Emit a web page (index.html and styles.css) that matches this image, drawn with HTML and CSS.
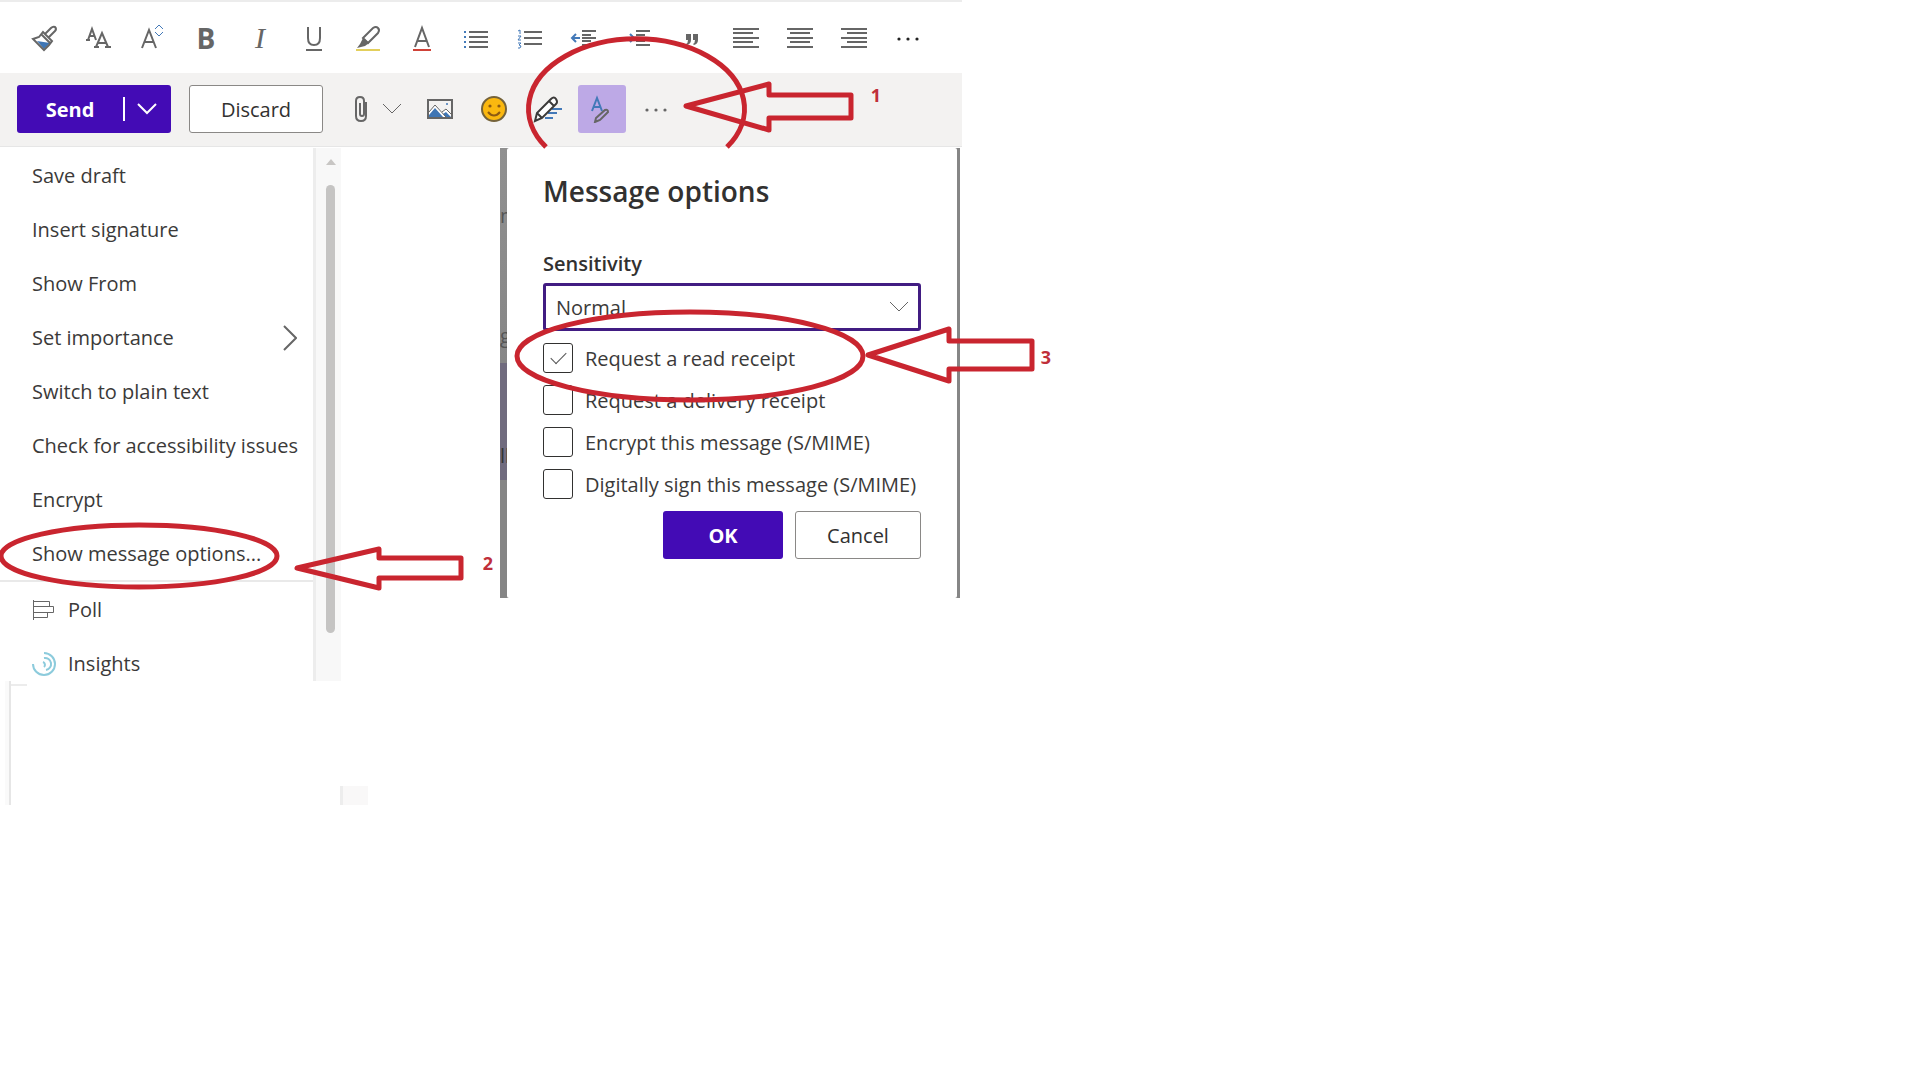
FILE: index.html
```html
<!DOCTYPE html>
<html lang="en">
<head>
<meta charset="utf-8">
<title>Message options</title>
<link rel="stylesheet" href="styles.css">
</head>
<body>
<main class="compose">
  <div class="toolbar" role="toolbar" aria-label="Formatting">
    <button class="tool" aria-label="Format painter"><svg width="28" height="28" viewBox="0 0 28 28"><path class="fill-blue" d="M7 17l13 2-6 6z"/><path class="line" d="M3 15l6-2 4-5 9 9-3 4-5 5zM15 10l6-6q2-2 4-1 2 2 0 4l-6 6M11 10l9 9"/></svg></button>
    <button class="tool" aria-label="Font"><svg width="28" height="28" viewBox="0 0 28 28"><path class="line" d="M4 16l4-11 4 11M5 12h6M2 16h4M12 23l6-14 6 14M14 19h8M10 23h5M21 23h6"/></svg></button>
    <button class="tool" aria-label="Font size"><svg width="28" height="28" viewBox="0 0 28 28"><path class="line" d="M4 24L11 6l7 18M6 18h10"/><path class="blue thin" d="M17 5l4-4 4 4M17 8l4 4 4-4"/></svg></button>
    <button class="tool bold" aria-label="Bold">B</button>
    <button class="tool italic" aria-label="Italic">I</button>
    <button class="tool" aria-label="Underline"><svg width="28" height="28" viewBox="0 0 28 28"><path class="line" d="M8 3v11q0 7 6 7t6-7V3M6 26h16"/></svg></button>
    <button class="tool" aria-label="Highlight"><svg width="28" height="28" viewBox="0 0 28 28"><path class="line" d="M9 14L19 4q3-2 5 0t0 5L14 19z"/><path class="fill-grey" d="M9 14l6 5-4 3-8 2 3-4z"/><path class="yellow" d="M2 26h24"/></svg></button>
    <button class="tool" aria-label="Font colour"><svg width="28" height="28" viewBox="0 0 28 28"><path class="line" d="M7 23L14 4l7 19M9 17h10"/><path class="red" d="M5 26h18"/></svg></button>
    <button class="tool" aria-label="Bullets"><svg width="28" height="28" viewBox="0 0 28 28"><path class="line" d="M7 8h19M7 13h19M7 18h19M7 23h19"/><path class="blue" d="M2 8h2M2 13h2M2 18h2M2 23h2"/></svg></button>
    <button class="tool" aria-label="Numbering"><svg width="28" height="28" viewBox="0 0 28 28"><path class="line" d="M8 8h18M8 14h18M8 20h18"/><path class="blue thin" d="M2 7l2-1v4M2 12h3l-3 4h3M2 19h3l-2 2 2 1-1 2H2"/></svg></button>
    <button class="tool" aria-label="Decrease indent"><svg width="28" height="28" viewBox="0 0 28 28"><path class="line" d="M12 7h14M12 11h9M12 14h14M12 17h9M12 21h14"/><path class="blue" d="M10 14H2M6 10l-4 4 4 4"/></svg></button>
    <button class="tool" aria-label="Increase indent"><svg width="28" height="28" viewBox="0 0 28 28"><path class="line" d="M12 7h14M12 11h9M12 14h14M12 17h9M12 21h14"/><path class="blue" d="M1 14h8M6 10l4 4-4 4"/></svg></button>
    <button class="tool" aria-label="Quote"><svg width="28" height="28" viewBox="0 0 28 28"><path class="fill-grey" d="M8 10h5v6q0 4-4 5l-1-1q2-1 2-4H8zM15 10h5v6q0 4-4 5l-1-1q2-1 2-4h-2z"/></svg></button>
    <button class="tool" aria-label="Align left"><svg width="28" height="28" viewBox="0 0 28 28"><path class="line" d="M1 5h26M1 9h20M1 14h26M1 18h20M1 23h26"/></svg></button>
    <button class="tool" aria-label="Centre"><svg width="28" height="28" viewBox="0 0 28 28"><path class="line" d="M1 5h26M4 9h20M1 14h26M4 18h20M1 23h26"/></svg></button>
    <button class="tool" aria-label="Align right"><svg width="28" height="28" viewBox="0 0 28 28"><path class="line" d="M1 5h26M7 9h20M1 14h26M7 18h20M1 23h26"/></svg></button>
    <button class="tool" aria-label="More formatting"><svg width="28" height="28" viewBox="0 0 28 28"><g class="fill-black"><circle cx="5" cy="15" r="1.600"/><circle cx="14" cy="15" r="1.600"/><circle cx="23" cy="15" r="1.600"/></g></svg></button>
  </div>

  <div class="commands">
    <div class="split">
      <button class="send">Send</button>
      <button class="send-more" aria-label="More send options"><svg width="20" height="12" viewBox="0 0 20 12"><path class="white" d="M1 1l9 9 9-9"/></svg></button>
    </div>
    <button class="plain discard">Discard</button>
    <div class="inserts">
      <button class="clip" aria-label="Attach"><svg width="14" height="28" viewBox="0 0 14 28"><path class="line" d="M12 7v14q0 5-5 5t-5-5V6q0-4 4-4t4 4v13q0 2-2 2t-2-2V8"/></svg></button>
      <button class="clip-more" aria-label="Attach options"><svg width="20" height="12" viewBox="0 0 20 12"><path class="line thin" d="M1 1l9 9 9-9"/></svg></button>
      <button class="tool" aria-label="Insert picture"><svg width="28" height="28" viewBox="0 0 28 28"><path class="line" d="M2 5h24v18H2z"/><path class="fill-white" d="M3 17l6-7 7 7 4-3 5 5v3H3z"/><path class="fill-blue" d="M3 20l6-7 8 9H3zM17 19l3-2 5 5h-5z"/><path class="line thin" d="M3 17l6-7 11 12M16 17l4-3 6 6"/><circle class="fill-blue" cx="21" cy="9" r="1"/></svg></button>
      <button class="tool" aria-label="Insert emoji"><svg width="28" height="28" viewBox="0 0 28 28"><circle class="face" cx="14" cy="14" r="12"/><circle class="fill-brown" cx="10" cy="11" r="1.600"/><circle class="fill-brown" cx="19" cy="11" r="1.600"/><path class="brown" d="M8 17q6 7 12 0"/></svg></button>
      <button class="tool" aria-label="Signature"><svg width="30" height="28" viewBox="0 0 30 28"><path class="blue" d="M19 14h10M15 18h9M12 23h8"/><path class="pencil" d="M2 26l2-8L18 4q3-3 5 0t0 5L9 23zM4 18l5 5M16 6l5 5"/></svg></button>
      <button class="tool active" aria-label="Formatting options" aria-pressed="true"><svg width="28" height="28" viewBox="0 0 28 28"><path class="blue" d="M4 16L9 3l5 13M6 12h6"/><path class="line" d="M7 27l1-4 9-8q3-1 3 2l-8 8z"/></svg></button>
      <button class="tool" aria-label="More options"><svg width="28" height="28" viewBox="0 0 28 28"><g class="fill-grey"><circle cx="5" cy="15" r="1.600"/><circle cx="14" cy="15" r="1.600"/><circle cx="23" cy="15" r="1.600"/></g></svg></button>
    </div>
  </div>

  <div class="panels">
    <section class="menu-panel">
      <div class="menu" role="menu">
        <button role="menuitem">Save draft</button>
        <button role="menuitem">Insert signature</button>
        <button role="menuitem">Show From</button>
        <button role="menuitem">Set importance<svg class="next" width="14" height="26" viewBox="0 0 14 26"><path class="line" d="M1 1l12 12L1 25"/></svg></button>
        <button role="menuitem">Switch to plain text</button>
        <button role="menuitem">Check for accessibility issues</button>
        <button role="menuitem">Encrypt</button>
        <button role="menuitem">Show message options...</button>
        <hr>
        <button role="menuitem"><svg width="24" height="24" viewBox="0 0 24 24"><path class="line thin" d="M1.500 2v20M1.500 3.500h16v5h-16M1.500 8.500h20v6h-20M1.500 14.500h14v5h-14"/></svg>Poll</button>
        <button role="menuitem"><svg width="24" height="24" viewBox="0 0 24 24"><path class="teal" d="M12 1a11 11 0 1 1-11 11M12 6a6 6 0 0 1 2 12M11 10a3 3 0 0 1 1 5"/></svg>Insights</button>
      </div>
      <div class="scroll"><span class="scroll-up"></span><span class="thumb"></span></div>
    </section>

    <section class="backdrop">
      <div class="behind" aria-hidden="true"><span class="peek">m</span><span class="peek">g</span><span class="peek dark">ll</span></div>
      <form class="dialog">
        <h1>Message options</h1>
        <label class="field-label" for="sensitivity">Sensitivity</label>
        <div class="select-wrap">
          <select id="sensitivity"><option>Normal</option></select>
          <svg class="caret" width="20" height="12" viewBox="0 0 20 12"><path class="line thin" d="M1 1l9 9 9-9"/></svg>
        </div>
        <label class="check"><input type="checkbox" checked><span>Request a read receipt</span></label>
        <label class="check"><input type="checkbox"><span>Request a delivery receipt</span></label>
        <label class="check"><input type="checkbox"><span>Encrypt this message (S/MIME)</span></label>
        <label class="check"><input type="checkbox"><span>Digitally sign this message (S/MIME)</span></label>
        <div class="actions"><button type="button" class="primary">OK</button><button type="button" class="plain">Cancel</button></div>
      </form>
    </section>
  </div>

  <div class="remnant"><div class="pane-edge"></div><div class="scroll-edge"></div></div>

  <svg class="marks" width="1080" height="620" viewBox="0 0 1080 620" aria-hidden="true">
    <path d="M546 147A108 70 0 1 1 727 147"/>
    <path d="M686 106L769 84V95H851V118H769V130Z"/>
    <ellipse cx="139" cy="556" rx="138" ry="31"/>
    <path d="M297 568L379 549V558H461V578H379V588Z"/>
    <ellipse cx="690" cy="356" rx="173" ry="44"/>
    <path d="M868 355L949 329V341H1032V369H949V381Z"/>
    <text x="876" y="102">1</text>
    <text x="488" y="570">2</text>
    <text x="1046" y="364">3</text>
  </svg>
</main>
</body>
</html>
```
FILE: styles.css
```css
* { box-sizing: border-box; }
body {
  margin: 0;
  background: #fff;
  color: #3b3a39;
  font: 20px/28px "Open Sans", "Noto Sans", sans-serif;
}
button {
  margin: 0;
  padding: 0;
  border: 0;
  background: none;
  color: inherit;
  font: inherit;
}
svg { display: block; flex: none; fill: none; }

.line { stroke: #666; stroke-width: 2; }
.blue { stroke: #4379b8; stroke-width: 2; }
.yellow { stroke: #e3cf5c; stroke-width: 2; }
.red { stroke: #cf4238; stroke-width: 2; }
.white { stroke: #fff; stroke-width: 2; }
.teal { stroke: #8ccbdc; stroke-width: 2; }
.pencil { fill: #fff; stroke: #3b3a39; stroke-width: 2; }
.face { fill: #fbb80f; stroke: #75633a; stroke-width: 2; }
.brown { stroke: #8d5a12; stroke-width: 2; }
.thin { stroke-width: 1; }
.fill-brown { fill: #8d5a12; }
.fill-blue { fill: #3f76b5; }
.fill-grey { fill: #666; }
.fill-black { fill: #222; }
.fill-white { fill: #fff; }

.compose { position: relative; width: 100%; max-width: 962px; }
.toolbar {
  display: flex;
  height: 73px;
  padding: 1px 17px 0;
  border-top: 2px solid #ececec;
}
.tool {
  display: flex;
  align-items: center;
  justify-content: center;
  width: 54px;
  color: #666;
}
.bold { font: 700 28px/28px "Open Sans", sans-serif; }
.italic { font: italic 30px/30px "Liberation Serif", serif; }

.commands {
  display: flex;
  align-items: center;
  height: 74px;
  padding: 0 17px 2px;
  background: #f3f2f1;
  border-bottom: 1px solid #e6e6e6;
}
.split {
  display: flex;
  align-items: center;
  width: 154px;
  height: 48px;
  border-radius: 3px;
  background: #430bb5;
  color: #fff;
}
.send { flex: 1; padding-top: 2px; font-weight: 700; }
.send-more {
  display: flex;
  align-items: center;
  justify-content: center;
  width: 48px;
  height: 24px;
  padding-right: 2px;
  border-left: 2px solid #fff;
}
.plain {
  height: 48px;
  padding-top: 2px;
  border: 1px solid #8a8886;
  border-radius: 3px;
  background: #fff;
  color: #323130;
  font-weight: 500;
}
.discard { width: 134px; margin-left: 18px; }
.inserts { display: flex; align-items: center; margin-left: 22px; }
.inserts .tool { height: 48px; }
.clip, .clip-more { display: flex; align-items: center; justify-content: center; height: 48px; }
.clip { width: 32px; }
.clip-more { width: 36px; padding-right: 6px; }
.inserts .active { width: 48px; margin: 0 3px; border-radius: 3px; background: #bda9e6; }

.panels { display: flex; align-items: flex-start; gap: 159px; padding: 1px 2px 0 0; }
.menu-panel { display: flex; width: 341px; height: 533px; overflow: hidden; }
.menu { flex: 1; min-width: 0; }
.menu button {
  display: flex;
  align-items: center;
  gap: 12px;
  width: 100%;
  height: 54px;
  padding: 2px 16px 0 32px;
  text-align: left;
  white-space: nowrap;
}
.menu hr { height: 2px; margin: 0; border: 0; background: #e9e9e9; }
.next { margin-left: auto; }
.scroll {
  width: 28px;
  padding: 11px 6px 0 10px;
  border-left: 3px solid #ededed;
  background: #f8f8f8;
}
.scroll-up {
  display: block;
  height: 6px;
  border: 5px solid transparent;
  border-top: 0;
  border-bottom: 6px solid #c8c6c4;
}
.thumb { display: block; height: 448px; margin-top: 20px; border-radius: 5px; background: #c5c4c3; }

.backdrop { display: flex; flex: 1; height: 450px; padding-right: 3px; background: #868686; }
.behind {
  display: flex;
  flex-direction: column;
  width: 7px;
  padding-top: 54px;
  gap: 92px;
  overflow: hidden;
  background: linear-gradient(#909090 0, #868686 215px, #706b7e 215px, #706b7e 332px, #858585 332px);
}
.peek { display: flex; height: 28px; color: #555; }
.dark { color: #333; }
.dialog { flex: 1; padding: 23px 36px 0; border-radius: 2px; background: #fff; }
.dialog h1 { margin: 0 0 39px; color: #323130; font-size: 28px; line-height: 40px; font-weight: 600; }
.field-label { display: block; height: 33px; color: #323130; font-weight: 600; }
.select-wrap { display: flex; align-items: center; margin-bottom: 12px; }
select {
  appearance: none;
  flex: 1;
  height: 48px;
  padding: 2px 10px 0;
  border: 3px solid #411c82;
  border-radius: 3px;
  background: #fff;
  color: #3b3a39;
  font: inherit;
}
.caret { margin-left: -32px; margin-right: 12px; pointer-events: none; }
.check { display: flex; align-items: center; gap: 12px; height: 30px; margin-bottom: 12px; white-space: nowrap; }
.check span { padding-top: 2px; }
.check input {
  appearance: none;
  flex: none;
  width: 30px;
  height: 30px;
  margin: 0;
  border: 1px solid #323130;
  border-radius: 3px;
}
.check input:checked::before {
  content: "";
  display: block;
  width: 14px;
  height: 7px;
  margin: 8px auto 0;
  border: solid #555;
  border-width: 0 0 1px 1px;
  transform: rotate(-45deg);
}
.actions { display: flex; justify-content: flex-end; gap: 12px; }
.primary { width: 120px; height: 48px; padding-top: 2px; border-radius: 3px; background: #430bb5; color: #fff; font-weight: 700; }
.actions .plain { width: 126px; }

.remnant { display: flex; align-items: flex-end; justify-content: space-between; width: 368px; height: 124px; padding-left: 5px; }
.pane-edge { width: 6px; height: 124px; border-right: 2px solid #e6e6e6; background: #fafafa; }
.pane-edge::after { content: ""; display: block; width: 16px; height: 2px; margin: 3px 0 0 6px; background: #ececec; }
.scroll-edge { width: 28px; height: 19px; border-left: 3px solid #ededed; background: #f9f8f8; }

.marks { position: absolute; top: 0; left: 0; pointer-events: none; }
.marks path, .marks ellipse { stroke: #c9252f; stroke-width: 5; stroke-linejoin: round; }
.marks text { fill: #bf2f3a; font-size: 18px; font-weight: 700; text-anchor: middle; }
```
